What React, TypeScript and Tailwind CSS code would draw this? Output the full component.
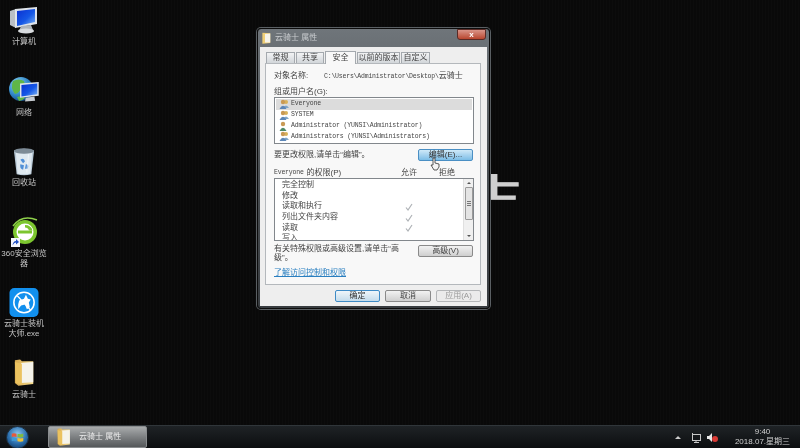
import React from "react";

const Monitor = ({ x = 0, y = 0, s = 1 }: { x?: number; y?: number; s?: number }) => (
  <g transform={`translate(${x} ${y}) scale(${s})`}>
    <path d="M0 4 L6 2 L6 21 L0 18 Z" fill="#b9bfc5" />
    <path d="M5 2 L27 0 L27 17 L5 21 Z" fill="#dfe4ea" />
    <path d="M7 4 L25 2 L25 15 L7 19 Z" fill="url(#scr)" />
    <path d="M11 19 L21 18 L23 23 Q16 27 9 24 Z" fill="#aeb4ba" />
    <ellipse cx="16" cy="24" rx="8" ry="2.4" fill="#d8dbde" />
  </g>
);

const Defs = () => (
  <defs>
    <linearGradient id="scr" x1="0" y1="0" x2="1" y2="1">
      <stop offset="0" stopColor="#0a2fd0" />
      <stop offset="0.55" stopColor="#1557e6" />
      <stop offset="1" stopColor="#7fb6f2" />
    </linearGradient>
    <radialGradient id="globe" cx="0.35" cy="0.3" r="0.8">
      <stop offset="0" stopColor="#8fd6f5" />
      <stop offset="0.6" stopColor="#2d83c5" />
      <stop offset="1" stopColor="#123f78" />
    </radialGradient>
    <linearGradient id="fold" x1="0" y1="0" x2="1" y2="0">
      <stop offset="0" stopColor="#d6a94e" />
      <stop offset="1" stopColor="#f7dd8e" />
    </linearGradient>
    <radialGradient id="orb" cx="0.5" cy="0.35" r="0.7">
      <stop offset="0" stopColor="#8fc7ee" />
      <stop offset="0.6" stopColor="#2b6fae" />
      <stop offset="1" stopColor="#123a63" />
    </radialGradient>
  </defs>
);

const ComputerIcon = () => (
  <svg width="30" height="28" viewBox="0 0 30 28">
    <Defs />
    <Monitor x={1} y={1} />
  </svg>
);
const NetworkIcon = () => (
  <svg width="32" height="30" viewBox="0 0 32 30">
    <circle cx="13" cy="13" r="12" fill="url(#globe)" />
    <path d="M5 5 Q11 2 16 5 Q18 10 13 11 Q12 17 7 18 Q2 12 5 5 Z" fill="#5fb648" />
    <path d="M9 21 Q14 19 17 22 Q14 25 11 25 Z" fill="#5fb648" />
    <g transform="translate(12 6) scale(0.72)">
      <path d="M0 2 L26 0 L26 19 L0 22 Z" fill="#dfe4ea" />
      <path d="M2 4 L24 2 L24 17 L2 20 Z" fill="url(#scr)" />
      <path d="M8 22 L20 20 L21 26 L7 27 Z" fill="#c6cbd0" />
    </g>
  </svg>
);
const BinIcon = () => (
  <svg width="22" height="31" viewBox="0 0 24 32">
    <path d="M1 4 Q12 0 23 4 L20 30 Q12 32 4 30 Z" fill="#b8c9d6" />
    <path d="M3 5 Q12 9 21 5 L19 29 Q12 31 5 29 Z" fill="#dfe9f0" />
    <ellipse cx="12" cy="4.5" rx="11" ry="3" fill="#7d8b96" />
    <path d="M8 14 Q12 11 13 16 L11 18 Z M8 19 L12 20 L11 25 Q7 24 8 19 Z M14 19 Q18 19 16 24 L13 24 Z" fill="#4f8fd6" />
    <path d="M17 8 L15 28" stroke="#fff" strokeWidth="1" opacity="0.6" />
  </svg>
);
const BrowserIcon = () => (
  <svg width="28" height="30" viewBox="0 0 28 30">
    <circle cx="15" cy="15" r="12" fill="#7cc62f" />
    <circle cx="15" cy="15" r="8.5" fill="#fff" />
    <path d="M8 13.5 H22 V16.5 H8 Z" fill="#7cc62f" />
    <path d="M15 8 Q21 8 22.5 13.5 L19 13.5 Q18 10.5 15 10.5 Z" fill="#7cc62f" />
    <path d="M3 9 Q12 -3 27 3" fill="none" stroke="#8ed14a" strokeWidth="1.4" />
    <rect x="1" y="21" width="9" height="9" fill="#f4f6fb" />
    <path d="M2.5 28.5 Q3 24 6 24 L6 22 L9 25 L6 27.5 L6 25.5 Q4 25.5 2.5 28.5 Z" fill="#1f4fc4" />
  </svg>
);
const KnightIcon = () => (
  <svg width="30" height="29" viewBox="0 0 30 30">
    <rect width="30" height="30" rx="5" fill="#1290ee" />
    <circle cx="15" cy="15" r="10.5" fill="none" stroke="#fff" strokeWidth="1.6" />
    <path d="M8 8 L22 23" stroke="#fff" strokeWidth="1.2" />
    <path d="M10 13 L15 11 L17 7 L19 11 L22 12 L20 15 L21 20 L18 22 L16 17 L12 18 L9 22 L9 17 Z" fill="#fff" />
  </svg>
);
const FolderIcon = ({ w = 21, h = 31 }: { w?: number; h?: number }) => (
  <svg width={w} height={h} viewBox="0 0 24 32">
    <path d="M1 2 L7 1 L9 3 L22 3 L22 29 L5 31 L1 28 Z" fill="url(#fold)" />
    <path d="M8 5 L22 4 L22 27 L8 28 Z" fill="#f5f3ea" />
    <path d="M1 4 L9 6 L9 30 L2 28 Z" fill="#ebc25f" />
  </svg>
);

const DesktopItem = ({ label, children }: { label: React.ReactNode; children: React.ReactNode }) => (
  <div className="flex flex-col items-center h-[70.6px] shrink-0 w-[48px]">
    <div className="h-[32px] flex items-center justify-center">{children}</div>
    <div className="mt-[1px] text-[8px] leading-[10px] text-center text-[#c4c4c4] w-[48px]">{label}</div>
  </div>
);

const Tab = ({ label, w, active }: { label: string; w: string; active?: boolean }) => (
  <div
    className={`${w} flex items-center justify-center border border-b-0 border-[#a4a9ae] ${
      active ? "h-[13px] bg-[#f8f8f8] -mb-[1px] z-10" : "h-[11px] bg-gradient-to-b from-[#f2f3f4] to-[#d2d6da]"
    } text-[8px] text-[#444]`}
  >
    {label}
  </div>
);

const Btn = ({ label, w, kind }: { label: string; w: string; kind?: "blue" | "dis" | "def" }) => (
  <div
    className={`${w} h-[12px] flex items-center justify-center rounded-[2px] border text-[8px] ${
      kind === "blue"
        ? "border-[#4a8fc4] bg-gradient-to-b from-[#cfe9f8] to-[#7cbde6] text-[#333]"
        : kind === "def"
        ? "border-[#3e8bc6] bg-gradient-to-b from-[#f0f6fa] to-[#c4dcec] text-[#333]"
        : kind === "dis"
        ? "border-[#b4b6b8] bg-[#ebebeb] text-[#9a9a9a]"
        : "border-[#8a8a8a] bg-gradient-to-b from-[#f2f2f2] to-[#cfcfcf] text-[#444]"
    }`}
  >
    {label}
  </div>
);

const UserIcon = ({ double }: { double?: boolean }) => (
  <svg width="10" height="10" viewBox="0 0 10 10" className="shrink-0">
    {double && <circle cx="7" cy="3" r="2" fill="#d9b25a" />}
    {double && <path d="M4 9 Q7 4 10 9 Z" fill="#7fa6c9" />}
    <circle cx="4" cy="3" r="2.2" fill="#c99a55" />
    <path d="M0.5 10 Q4 3.5 7.5 10 Z" fill={double ? "#5d87b8" : "#4f8a68"} />
  </svg>
);

const Check = () => (
  <svg width="8" height="8" viewBox="0 0 8 8">
    <path d="M1 4.5 L3 7 L7 1" fill="none" stroke="#aeb2b6" strokeWidth="1.2" />
  </svg>
);

const users = [
  { t: "Everyone", d: true, sel: true },
  { t: "SYSTEM", d: true },
  { t: "Administrator (YUNSI\\Administrator)", d: false },
  { t: "Administrators (YUNSI\\Administrators)", d: true },
];
const perms = [
  { t: "完全控制" },
  { t: "修改" },
  { t: "读取和执行", c: true },
  { t: "列出文件夹内容", c: true },
  { t: "读取", c: true },
  { t: "写入" },
];

const mono = { fontFamily: '"Liberation Mono", "Noto Sans CJK SC", monospace' };

export default function App() {
  return (
    <div
      className="w-[800px] h-[448px] overflow-hidden flex flex-col bg-[#0b0b0b] blur-[0.45px]"
      style={{ fontFamily: '"Liberation Sans", "Noto Sans CJK SC", sans-serif' }}
    >
      <div className="relative flex-1 min-h-0 overflow-hidden bg-[repeating-linear-gradient(90deg,#0c0c0c_0px,#0c0c0c_1px,#090909_1px,#090909_3px)] pt-[4px]">
        <div className="flex flex-col w-[48px]">
          <DesktopItem label="计算机"><ComputerIcon /></DesktopItem>
          <DesktopItem label="网络"><NetworkIcon /></DesktopItem>
          <DesktopItem label="回收站"><BinIcon /></DesktopItem>
          <DesktopItem label={<>360安全浏览<br />器</>}><BrowserIcon /></DesktopItem>
          <DesktopItem label={<>云骑士装机<br />大师.exe</>}><KnightIcon /></DesktopItem>
          <DesktopItem label="云骑士"><FolderIcon /></DesktopItem>
        </div>

        {/* wallpaper glyph */}
        <div className="absolute left-[466px] top-[161px] text-[54px] leading-[54px] text-[#cfcfcf] font-bold scale-y-[0.5] [-webkit-text-stroke:2px_#cfcfcf]">士</div>

        {/* window */}
        <div className="absolute left-[257px] top-[28px] w-[233px] h-[281px] rounded-[4px] border border-[#0c0c0c] bg-gradient-to-b from-[#6f757a] via-[#4a4f53] to-[#383c40] shadow-[0_0_0_1px_#5a5f63] px-[2px] pb-[2px] flex flex-col">
          {/* title */}
          <div className="h-[18px] flex items-center shrink-0 relative pl-[2px]">
            <svg width="9" height="12" viewBox="0 0 24 32"><path d="M1 2 L22 3 L22 29 L1 31 Z" fill="#f0cf76" /><path d="M8 5 L22 4 L22 28 L8 28 Z" fill="#f5f3ea" /></svg>
            <span className="ml-[4px] text-[8px] text-[#c9cccf]">云骑士 属性</span>
            <div className="absolute right-[1px] top-0 w-[29px] h-[11px] rounded-b-[3px] bg-gradient-to-b from-[#d99488] to-[#b8452e] border border-[#5a2a25] flex items-center justify-center text-white text-[8px] font-bold">x</div>
          </div>
          {/* client */}
          <div className="flex-1 bg-[#eeeeee] flex flex-col pl-[5px] pr-[6px] pt-[5px]">
            <div className="flex items-end h-[11px] pl-[1px] gap-[1px] shrink-0">
              <Tab label="常规" w="w-[29px]" />
              <Tab label="共享" w="w-[28px]" />
              <Tab label="安全" w="w-[31px]" active />
              <Tab label="以前的版本" w="w-[43px]" />
              <Tab label="自定义" w="w-[29px]" />
            </div>
            <div className="h-[222px] border border-[#b4b8bc] bg-[#f8f8f8] px-[8px] text-[8px] text-[#444] flex flex-col shrink-0">
              <div className="flex items-center h-[11px] mt-[6px] whitespace-nowrap">
                <span className="w-[50px]">对象名称:</span>
                <span className="text-[6.5px] tracking-[-0.2px]" style={mono}>C:\Users\Administrator\Desktop\<span className="text-[8px] tracking-normal">云骑士</span></span>
              </div>
              <div className="h-[11px] mt-[5px] flex items-center">组或用户名(G):</div>
              <div className="w-[200px] h-[47px] border border-[#82878c] bg-white p-[1px] flex flex-col">
                {users.map((u) => (
                  <div key={u.t} className={`h-[10.7px] flex items-center gap-[1px] pl-[3px] text-[6.5px] tracking-[-0.15px] whitespace-nowrap ${u.sel ? "bg-[#dcdcdc]" : ""}`} style={mono}>
                    <UserIcon double={u.d} />
                    <span className="ml-[1px]">{u.t}</span>
                  </div>
                ))}
              </div>
              <div className="flex items-center justify-between w-[199px] h-[12px] mt-[5px]">
                <span>要更改权限,请单击“编辑”。</span>
                <Btn label="编辑(E)..." w="w-[55px]" kind="blue" />
              </div>
              <div className="flex items-center h-[11px] mt-[6px] w-[200px] relative">
                <span className="text-[6.5px] tracking-[-0.2px]" style={mono}>Everyone</span>
                <span className="ml-[3px]">的权限(P)</span>
                <span className="absolute left-[127px]">允许</span>
                <span className="absolute left-[165px]">拒绝</span>
              </div>
              <div className="w-[200px] h-[63px] border border-[#82878c] bg-white flex overflow-hidden">
                <div className="flex-1 pl-[7px] pt-[1px] flex flex-col overflow-hidden">
                  {perms.map((p) => (
                    <div key={p.t} className="h-[10.6px] shrink-0 flex items-center relative">
                      <span>{p.t}</span>
                      {p.c && <span className="absolute left-[123px] top-[2px]"><Check /></span>}
                    </div>
                  ))}
                </div>
                <div className="w-[10px] bg-[#f0f0f0] flex flex-col items-center border-l border-[#e0e0e0]">
                  <svg width="8" height="8" viewBox="0 0 8 8" className="shrink-0"><path d="M2 5 L4 3 L6 5 Z" fill="#555" /></svg>
                  <div className="w-[8px] h-[33px] rounded-[1px] border border-[#9a9a9a] bg-[#e4e4e4] flex flex-col gap-[1px] items-center justify-center">
                    <div className="w-[4px] h-[1px] bg-[#777]" />
                    <div className="w-[4px] h-[1px] bg-[#777]" />
                    <div className="w-[4px] h-[1px] bg-[#777]" />
                  </div>
                  <svg width="8" height="8" viewBox="0 0 8 8" className="mt-auto shrink-0"><path d="M2 3 L4 5 L6 3 Z" fill="#555" /></svg>
                </div>
              </div>
              <div className="flex justify-between w-[199px] mt-[4px]">
                <div className="w-[132px] leading-[8.5px]">有关特殊权限或高级设置,请单击“高级”。</div>
                <Btn label="高级(V)" w="w-[55px]" />
              </div>
              <div className="mt-[5px] text-[#2a7fc0] underline h-[11px]">了解访问控制和权限</div>
            </div>
            <div className="flex justify-end gap-[5px] mt-[5px] shrink-0">
              <Btn label="确定" w="w-[45px]" kind="def" />
              <Btn label="取消" w="w-[46px]" />
              <Btn label="应用(A)" w="w-[45px]" kind="dis" />
            </div>
          </div>
        </div>

        {/* cursor */}
        <svg className="absolute left-[430px] top-[157px]" width="10" height="14" viewBox="0 0 10 14">
          <path d="M3 1 L5 1 L5 6 L9 7 L9 10 L7 13 L4 13 L1 8 L3 8 Z" fill="#f4f4f4" stroke="#333" strokeWidth="0.8" />
        </svg>
      </div>

      {/* taskbar */}
      <div className="h-[23px] shrink-0 flex items-stretch bg-gradient-to-b from-[#1f2326] to-[#0c0e10] border-t border-[#30363a]">
        <div className="w-[48px] flex items-center pl-[6px]">
          <svg width="23" height="23" viewBox="0 0 24 24">
            <Defs />
            <circle cx="12" cy="12" r="11.5" fill="url(#orb)" stroke="#1c2a36" />
            <path d="M6 8 Q8 7 11 8 L11 11.5 Q8 10.5 6 11.5 Z" fill="#e8593a" />
            <path d="M12 8 Q15 9 18 8 L18 11.5 Q15 12.5 12 11.5 Z" fill="#7fbb3f" />
            <path d="M6 12.5 Q8 11.5 11 12.5 L11 16 Q8 15 6 16 Z" fill="#3d9ad8" />
            <path d="M12 12.5 Q15 13.5 18 12.5 L18 16 Q15 17 12 16 Z" fill="#f2c231" />
          </svg>
        </div>
        <div className="w-[99px] flex items-center pl-[8px] gap-[8px] rounded-[2px] bg-gradient-to-b from-[#a8abac] via-[#7d8082] to-[#55585a] border border-[#8a8d8f]">
          <FolderIcon w={14} h={20} />
          <span className="text-[8px] text-[#ececec]">云骑士 属性</span>
        </div>
        <div className="ml-auto flex items-center">
          <svg width="6" height="5" viewBox="0 0 6 5" className="mr-[10px]"><path d="M0 4 L3 1 L6 4 Z" fill="#ccc" /></svg>
          <svg width="11" height="11" viewBox="0 0 11 11" className="mr-[5px]">
            <rect x="1.5" y="2.5" width="8" height="6" fill="none" stroke="#c8c8c8" />
            <path d="M1 1 L3 3 M5 9 L5 10.5 M3 10.5 H8" stroke="#c8c8c8" />
          </svg>
          <svg width="12" height="11" viewBox="0 0 12 11" className="mr-[12px]">
            <path d="M0 4 H2 L5 1 V10 L2 7 H0 Z" fill="#e8e8e8" />
            <circle cx="8" cy="7" r="3" fill="#d83a35" />
          </svg>
          <div className="w-[63px] mr-[6px] text-[8px] leading-[10px] text-center text-[#cfcfcf]">
            <div>9:40</div>
            <div className="whitespace-nowrap">2018.07.星期三</div>
          </div>
        </div>
      </div>
    </div>
  );
}
